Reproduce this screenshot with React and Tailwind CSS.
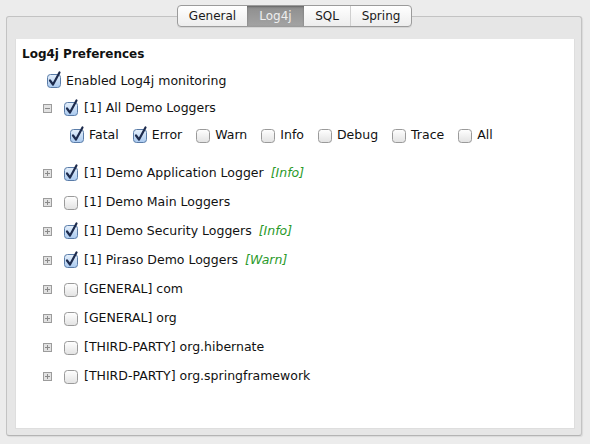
import React from 'react'

const FONT = { fontFamily: '"Lucida Grande", "DejaVu Sans", sans-serif' }

const LEVELS = [
  { name: 'Fatal', on: true },
  { name: 'Error', on: true },
  { name: 'Warn', on: false },
  { name: 'Info', on: false },
  { name: 'Debug', on: false },
  { name: 'Trace', on: false },
  { name: 'All', on: false },
]

const LOGGERS = [
  { name: '[1] Demo Application Logger', on: true, level: 'Info' },
  { name: '[1] Demo Main Loggers', on: false },
  { name: '[1] Demo Security Loggers', on: true, level: 'Info' },
  { name: '[1] Piraso Demo Loggers', on: true, level: 'Warn' },
  { name: '[GENERAL] com', on: false },
  { name: '[GENERAL] org', on: false },
  { name: '[THIRD-PARTY] org.hibernate', on: false },
  { name: '[THIRD-PARTY] org.springframework', on: false },
]

const TABS = [
  { label: 'General', w: 'w-[69px]' },
  { label: 'Log4j', w: 'w-[57px]', active: true },
  { label: 'SQL', w: 'w-[46px]' },
  { label: 'Spring', w: 'w-[61px]' },
]

function Checkbox({ checked }) {
  return (
    <svg width="14" height="14" viewBox="0 0 14 14" className="shrink-0 overflow-visible">
      <defs>
        <linearGradient id="cbOff" x1="0" y1="0" x2="0" y2="1">
          <stop offset="0" stopColor="#ffffff" />
          <stop offset="1" stopColor="#e2e2e2" />
        </linearGradient>
        <linearGradient id="cbOn" x1="0" y1="0" x2="0" y2="1">
          <stop offset="0" stopColor="#e6f0fb" />
          <stop offset="1" stopColor="#a9c9ef" />
        </linearGradient>
      </defs>
      <rect
        x="0.5" y="0.5" width="13" height="13" rx="3"
        fill={checked ? 'url(#cbOn)' : 'url(#cbOff)'}
        stroke={checked ? '#5a7ca8' : '#9a9a9a'}
      />
      {checked && (
        <path d="M3 6.5 L6 10.5 L12.5 -1.5" fill="none" stroke="#1d2b4d" strokeWidth="2.2" strokeLinecap="round" strokeLinejoin="round" />
      )}
    </svg>
  )
}

function Expander({ open }) {
  return (
    <svg width="9" height="9" viewBox="0 0 9 9" className="shrink-0">
      <rect x="0.5" y="0.5" width="8" height="8" fill="#e2e2e2" stroke="#9c9c9c" />
      <path d="M2 4.5 H7" stroke="#8a8a8a" />
      {!open && <path d="M4.5 2 V7" stroke="#8a8a8a" />}
    </svg>
  )
}

export default function App() {
  return (
    <div className="w-[590px] h-[444px] bg-[#ececec] pt-[5px] pl-[6px] pr-[8px] text-[#111]" style={FONT}>
      {/* tab switcher */}
      <div className="relative z-10 flex justify-center pl-[1px]">
        <div className="flex h-[22px] rounded-[4px] border border-[#9b9b9b] bg-gradient-to-b from-white to-[#ededed] shadow-[0_1px_0_rgba(0,0,0,0.08)] overflow-hidden text-[12px]">
          {TABS.map((t, i) => (
            <div
              key={t.label}
              className={
                'flex items-center justify-center ' + t.w + ' ' +
                (t.active
                  ? 'bg-gradient-to-b from-[#8e8e8e] to-[#a3a3a3] text-[#eeeeee] shadow-[inset_0_1px_2px_rgba(0,0,0,0.3)]'
                  : 'text-[#1a1a1a]') +
                (i > 0 && !t.active && !TABS[i - 1].active ? ' border-l border-[#cfcfcf]' : '')
              }
            >
              {t.label}
            </div>
          ))}
        </div>
      </div>

      {/* frame */}
      <div className="-mt-[11px] h-[420px] rounded-[3px] border border-[#c3c3c3] border-b-[#b4b4b4] bg-[#e6e6e6] pt-[22px] pl-[8px] pr-[6px] pb-[6px] shadow-[1px_1px_1px_rgba(0,0,0,0.08)]">
        <div className="h-[390px] bg-white border border-[#dedede] border-t-0 pt-[1px] pl-[6px] text-[12.5px]">
          <div className="h-[27px] flex items-center font-bold text-[12px]">Log4j Preferences</div>

          <div className="h-[28px] flex items-center pl-[25px] gap-[5px]">
            <Checkbox checked />
            <span>Enabled Log4j monitoring</span>
          </div>

          <div className="h-[27px] flex items-center pl-[21px]">
            <Expander open />
            <div className="ml-[12px] flex items-center gap-[6px]">
              <Checkbox checked />
              <span>[1] All Demo Loggers</span>
            </div>
          </div>

          <div className="h-[27px] flex items-center pl-[48px] gap-[14px]">
            {LEVELS.map(l => (
              <div key={l.name} className="flex items-center gap-[5px]">
                <Checkbox checked={l.on} />
                <span>{l.name}</span>
              </div>
            ))}
          </div>

          <div className="mt-[10px]">
            {LOGGERS.map(g => (
              <div key={g.name} className="h-[29px] flex items-center pl-[21px]">
                <Expander />
                <div className="ml-[12px] flex items-center gap-[6px]">
                  <Checkbox checked={g.on} />
                  <span>{g.name}</span>
                  {g.level && <span className="ml-[1px] italic text-[#2a9a2a]">[{g.level}]</span>}
                </div>
              </div>
            ))}
          </div>
        </div>
      </div>
    </div>
  )
}
